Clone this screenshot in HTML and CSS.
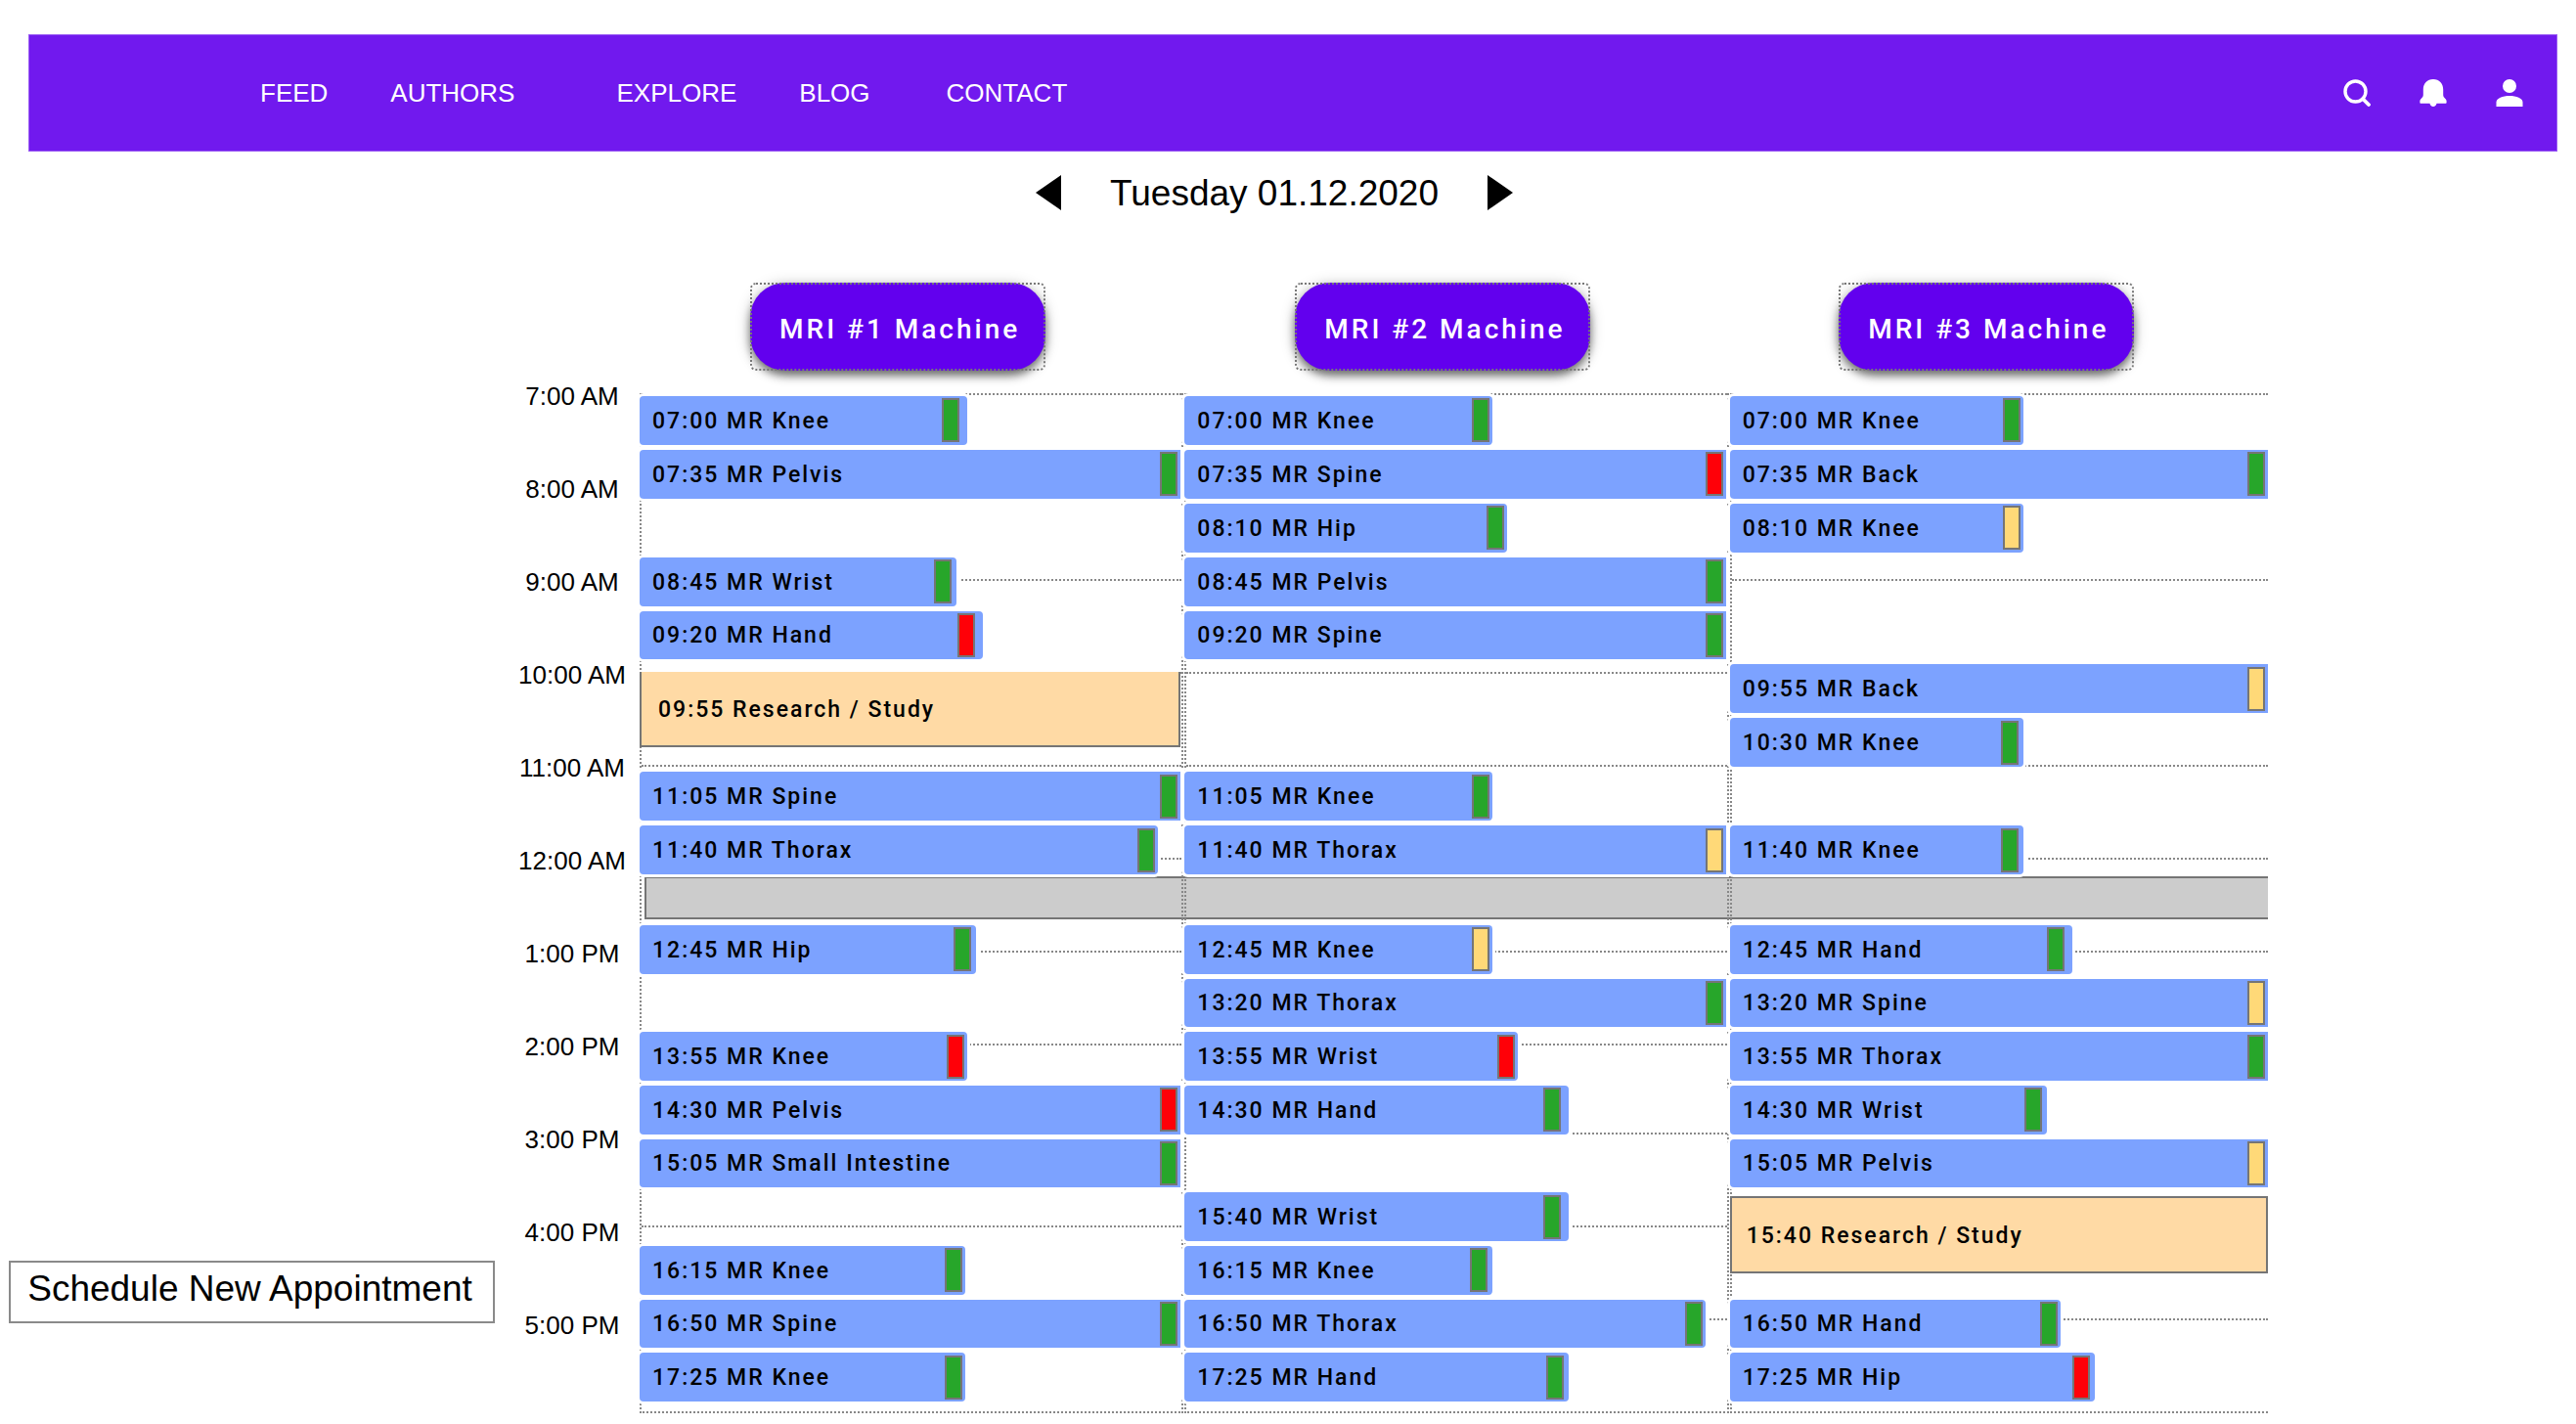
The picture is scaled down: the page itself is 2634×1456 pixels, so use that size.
FILE: index.html
```html
<!DOCTYPE html>
<html lang="en">
<head>
<meta charset="utf-8">
<meta name="viewport" content="width=device-width, initial-scale=1">
<title>MRI Schedule</title>
<link rel="stylesheet" href="styles.css">
</head>
<body>
<header class="topbar">
  <nav class="nav" aria-label="Main">
    <a href="#feed">FEED</a>
    <a href="#authors" class="group-end">AUTHORS</a>
    <a href="#explore">EXPLORE</a>
    <a href="#blog" class="before-contact">BLOG</a>
    <a href="#contact">CONTACT</a>
  </nav>
  <div class="tools">
    <button type="button" class="icon-btn" aria-label="Search">
      <svg viewBox="0 0 28 28"><circle cx="12.500" cy="12.500" r="10.500" fill="none" stroke="#fff" stroke-width="3.400"/><path d="M20 20l6 6" stroke="#fff" stroke-width="3.800" stroke-linecap="round"/></svg>
    </button>
    <button type="button" class="icon-btn" aria-label="Notifications">
      <svg viewBox="0 0 28 28"><path fill="#fff" d="M14 0C7.800 0 3.800 4.500 3.800 10.500v5.500c0 1.600-1 2.800-2.200 3.900C.8 20.600.4 21.400.4 22.600v1.200c0 .7.400 1 1 1h9.100c.3 1.900 1.700 3.200 3.500 3.200s3.200-1.300 3.500-3.200h9.100c.6 0 1-.3 1-1v-1.200c0-1.200-.4-2-1.200-2.700-1.200-1.100-2.200-2.300-2.200-3.900v-5.500C24.200 4.500 20.200 0 14 0z"/></svg>
    </button>
    <button type="button" class="icon-btn" aria-label="Account">
      <svg viewBox="0 0 28 28"><circle cx="14" cy="7" r="7" fill="#fff"/><path fill="#fff" d="M.5 28v-4.500C.5 19.500 7 17 14 17s13.500 2.500 13.500 6.500V28z"/></svg>
    </button>
  </div>
</header>

<div class="datebar">
  <button type="button" class="arrow" aria-label="Previous day"><svg viewBox="0 0 26 36"><path d="M26 0v36L0 18z"/></svg></button>
  <h1 class="date">Tuesday 01.12.2020</h1>
  <button type="button" class="arrow" aria-label="Next day"><svg viewBox="0 0 26 36"><path d="M0 0v36l26-18z"/></svg></button>
</div>

<main class="planner">
  <aside class="side">
    <button type="button" class="new-appt">Schedule New Appointment</button>
  </aside>

  <ol class="times">
    <li>7:00 AM</li><li>8:00 AM</li><li>9:00 AM</li><li>10:00 AM</li><li>11:00 AM</li><li>12:00 AM</li>
    <li>1:00 PM</li><li>2:00 PM</li><li>3:00 PM</li><li>4:00 PM</li><li>5:00 PM</li>
  </ol>

  <div class="schedule">
    <div class="head c1"><span class="frame-dots"><button type="button" class="machine">MRI #1 Machine</button></span></div>
    <div class="head c2"><span class="frame-dots"><button type="button" class="machine">MRI #2 Machine</button></span></div>
    <div class="head c3"><span class="frame-dots"><button type="button" class="machine">MRI #3 Machine</button></span></div>

    <div class="lunch"></div>

    <div class="hours c1"><i></i><i></i><i></i><i></i><i></i><i></i><i></i><i></i><i></i><i></i><i></i></div>
    <div class="hours c2"><i></i><i></i><i></i><i></i><i></i><i></i><i></i><i></i><i></i><i></i><i></i></div>
    <div class="hours c3"><i></i><i></i><i></i><i></i><i></i><i></i><i></i><i></i><i class="plain"></i><i></i><i></i></div>

    <ul class="slots am c1">
      <li><div class="appt far" style="width:60.6%">07:00 MR Knee<span class="mark ok"></span></div></li>
      <li><div class="appt full">07:35 MR Pelvis<span class="mark ok"></span></div></li>
      <li></li>
      <li><div class="appt mid" style="width:58.5%">08:45 MR Wrist<span class="mark ok"></span></div></li>
      <li><div class="appt far" style="width:63.4%">09:20 MR Hand<span class="mark stop"></span></div></li>
      <li class="double"><div class="study under-line">09:55 Research / Study</div></li>
      <li><div class="appt full">11:05 MR Spine<span class="mark ok"></span></div></li>
      <li><div class="appt" style="width:95.7%">11:40 MR Thorax<span class="mark ok"></span></div></li>
    </ul>
    <ul class="slots pm c1">
      <li><div class="appt mid" style="width:62.100%">12:45 MR Hip<span class="mark ok"></span></div></li>
      <li></li>
      <li><div class="appt" style="width:60.6%">13:55 MR Knee<span class="mark stop"></span></div></li>
      <li><div class="appt full">14:30 MR Pelvis<span class="mark stop"></span></div></li>
      <li><div class="appt full">15:05 MR Small Intestine<span class="mark ok"></span></div></li>
      <li></li>
      <li><div class="appt" style="width:60.1%">16:15 MR Knee<span class="mark ok"></span></div></li>
      <li><div class="appt full">16:50 MR Spine<span class="mark ok"></span></div></li>
      <li><div class="appt" style="width:60.1%">17:25 MR Knee<span class="mark ok"></span></div></li>
    </ul>

    <ul class="slots am c2">
      <li><div class="appt" style="width:56.8%">07:00 MR Knee<span class="mark ok"></span></div></li>
      <li><div class="appt full">07:35 MR Spine<span class="mark stop"></span></div></li>
      <li><div class="appt" style="width:59.6%">08:10 MR Hip<span class="mark ok"></span></div></li>
      <li><div class="appt full">08:45 MR Pelvis<span class="mark ok"></span></div></li>
      <li><div class="appt full">09:20 MR Spine<span class="mark ok"></span></div></li>
      <li></li>
      <li></li>
      <li><div class="appt" style="width:56.8%">11:05 MR Knee<span class="mark ok"></span></div></li>
      <li><div class="appt full">11:40 MR Thorax<span class="mark wait"></span></div></li>
    </ul>
    <ul class="slots pm c2">
      <li><div class="appt" style="width:56.8%">12:45 MR Knee<span class="mark wait"></span></div></li>
      <li><div class="appt full">13:20 MR Thorax<span class="mark ok"></span></div></li>
      <li><div class="appt" style="width:61.6%">13:55 MR Wrist<span class="mark stop"></span></div></li>
      <li><div class="appt far" style="width:71%">14:30 MR Hand<span class="mark ok"></span></div></li>
      <li></li>
      <li><div class="appt far" style="width:71%">15:40 MR Wrist<span class="mark ok"></span></div></li>
      <li><div class="appt mid" style="width:56.8%">16:15 MR Knee<span class="mark ok"></span></div></li>
      <li><div class="appt" style="width:96.2%">16:50 MR Thorax<span class="mark ok"></span></div></li>
      <li><div class="appt mid" style="width:71%">17:25 MR Hand<span class="mark ok"></span></div></li>
    </ul>

    <ul class="slots am c3">
      <li><div class="appt" style="width:54.5%">07:00 MR Knee<span class="mark ok"></span></div></li>
      <li><div class="appt full">07:35 MR Back<span class="mark ok"></span></div></li>
      <li><div class="appt" style="width:54.5%">08:10 MR Knee<span class="mark wait"></span></div></li>
      <li></li>
      <li></li>
      <li><div class="appt full">09:55 MR Back<span class="mark wait"></span></div></li>
      <li><div class="appt mid" style="width:54.5%">10:30 MR Knee<span class="mark ok"></span></div></li>
      <li></li>
      <li><div class="appt mid" style="width:54.5%">11:40 MR Knee<span class="mark ok"></span></div></li>
    </ul>
    <ul class="slots pm c3">
      <li><div class="appt far" style="width:63.7%">12:45 MR Hand<span class="mark ok"></span></div></li>
      <li><div class="appt full">13:20 MR Spine<span class="mark wait"></span></div></li>
      <li><div class="appt full">13:55 MR Thorax<span class="mark ok"></span></div></li>
      <li><div class="appt mid" style="width:59%">14:30 MR Wrist<span class="mark ok"></span></div></li>
      <li><div class="appt full">15:05 MR Pelvis<span class="mark wait"></span></div></li>
      <li class="double"><div class="study">15:40 Research / Study</div></li>
      <li><div class="appt" style="width:61.4%">16:50 MR Hand<span class="mark ok"></span></div></li>
      <li><div class="appt mid" style="width:67.9%">17:25 MR Hip<span class="mark stop"></span></div></li>
    </ul>
  </div>
</main>
</body>
</html>
```
FILE: styles.css
```css
* { box-sizing: border-box; }

body {
  margin: 0;
  padding: 35px 0 12px;
  background: #fff;
  color: #000;
  font-family: "Liberation Sans", Arial, sans-serif;
}

button {
  margin: 0;
  padding: 0;
  border: 0;
  background: none;
  color: inherit;
  font: inherit;
  cursor: pointer;
}

ol, ul { list-style: none; margin: 0; padding: 0; }

/* Top bar */
.topbar {
  display: flex;
  align-items: center;
  justify-content: space-between;
  height: 120px;
  margin: 0 19px 0 29px;
  padding: 0 34px 0 236px;
  background: #7119ee;
  border: 1px solid #9a5cf3;
}

.nav { display: flex; gap: 64px; }
.nav a { color: #fff; font-size: 26px; line-height: 32px; text-decoration: none; }
.nav .group-end { margin-right: 40px; }
.nav .before-contact { margin-right: 14px; }

.tools { display: flex; gap: 50px; }
.icon-btn, .icon-btn svg { display: block; width: 28px; height: 28px; }

/* Date switcher */
.datebar {
  display: flex;
  align-items: center;
  justify-content: center;
  gap: 50px;
  padding: 18px 28px 68px 0;
}

.date { margin: 0; padding-top: 2px; font-size: 37px; font-weight: 400; line-height: 46px; }
.arrow, .arrow svg { display: block; width: 26px; height: 36px; }

/* Planner */
.planner {
  display: grid;
  grid-template-columns: 516px 138px 1fr;
  padding-right: 315px;
}

.side { align-self: end; padding: 0 10px 92px 9px; }

.new-appt {
  width: 100%;
  height: 64px;
  padding: 0 4px 6px 0;
  border: 2px solid #8a8a8a;
  font-size: 37px;
  line-height: 48px;
  white-space: nowrap;
}

.times {
  display: grid;
  grid-auto-rows: 95px;
  align-content: start;
  padding-top: 101px;
  height: 0;
  text-align: center;
  font-size: 26px;
  line-height: 30px;
}

.schedule {
  display: grid;
  grid-template-columns: 553fr 553fr 550fr;
  grid-template-rows: 113px 492px 52px auto;
  column-gap: 4px;
  font-family: Roboto, sans-serif;
  font-weight: 500;
}

.c1 { grid-column: 1; }
.c2 { grid-column: 2; }
.c3 { grid-column: 3; }

.head {
  grid-row: 1;
  display: flex;
  align-items: flex-start;
  justify-content: center;
  padding-right: 26px;
}

.frame-dots { position: relative; display: block; }

.frame-dots::after {
  content: "";
  position: absolute;
  inset: 0;
  border: 2px dotted #777;
  border-radius: 6px;
  pointer-events: none;
}

.machine {
  display: block;
  width: 302px;
  height: 90px;
  padding: 4px 0 0 5px;
  border-radius: 36px;
  background: #6200ee;
  box-shadow: 0 5px 8px rgba(0, 0, 0, .5), 0 2px 16px rgba(0, 0, 0, .2);
  color: #fff;
  font-size: 28px;
  letter-spacing: 3px;
}

.lunch {
  grid-row: 3;
  grid-column: 1 / -1;
  height: 44px;
  margin: 2px 0 0 5px;
  border: 2px solid #757575;
  border-right: 0;
  background: #ccc;
}

/* Dotted hour grid behind the appointments */
.hours {
  grid-row: 2 / 5;
  display: grid;
  grid-template-rows: repeat(7, 95px) 91px repeat(3, 95px);
  margin-right: -3px;
  border: dotted #888;
  border-width: 0 2px 2px;
}

.hours.c3 { margin-right: 0; border-right: 0; }
.hours i { border-top: 2px dotted #888; }
.hours .plain { border-top: 0; }

.slots {
  display: grid;
  grid-template-rows: repeat(9, 1fr);
  gap: 5px;
  font-size: 23px;
  letter-spacing: 2px;
}

.am { grid-row: 2; padding-top: 3px; }
.pm { grid-row: 4; height: 487px; margin-bottom: 11px; }
.slots li { display: flex; min-height: 0; }
.slots .double { grid-row: span 2; }

.appt {
  display: flex;
  align-items: center;
  justify-content: space-between;
  padding: 0 3px 0 13px;
  border-radius: 4px;
  background: #7ca2ff;
  box-shadow: 0 0 0 3px #fff;
  line-height: 46px;
  white-space: nowrap;
}

.appt.full { width: 100%; border-radius: 4px 0 0 4px; }
.appt.mid { padding-right: 5px; }
.appt.far { padding-right: 8px; }

.appt, .study { padding-top: 2px; }

.mark {
  width: 18px;
  height: 45px;
  margin-bottom: 2px;
  border: 2px solid #757575;
}

.ok { background: #27a62a; }
.stop { background: #ff0008; }
.wait { background: #ffd978; }

.study {
  display: flex;
  align-items: center;
  width: 100%;
  height: 79px;
  margin-top: 4px;
  padding-left: 15px;
  border: 2px solid #757575;
  background: #ffdaa5;
}

.study.under-line {
  height: 77px;
  margin-top: 8px;
  padding-left: 17px;
  border-top: 0;
}
```
